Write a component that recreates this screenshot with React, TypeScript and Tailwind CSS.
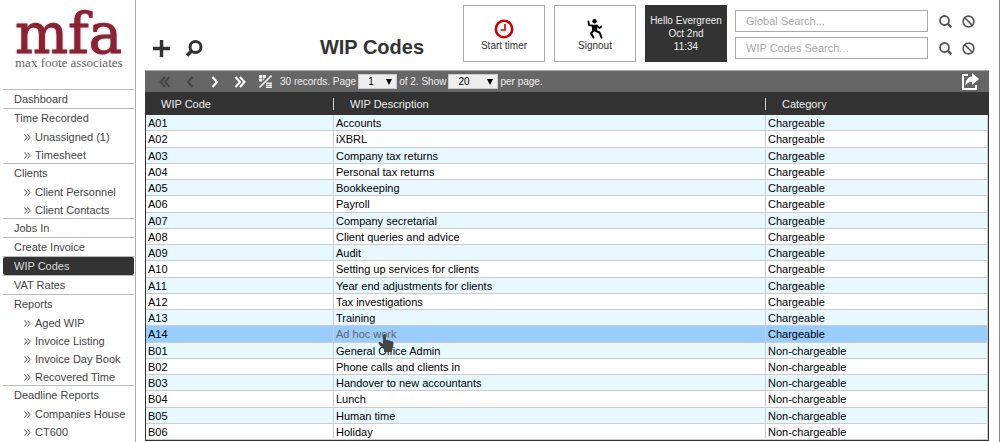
import React from "react";

const menu = [
  { label: "Dashboard", children: [] },
  { label: "Time Recorded", children: ["Unassigned (1)", "Timesheet"] },
  { label: "Clients", children: ["Client Personnel", "Client Contacts"] },
  { label: "Jobs In", children: [] },
  { label: "Create Invoice", children: [] },
  { label: "WIP Codes", children: [], active: true },
  { label: "VAT Rates", children: [] },
  { label: "Reports", children: ["Aged WIP", "Invoice Listing", "Invoice Day Book", "Recovered Time"] },
  { label: "Deadline Reports", children: ["Companies House", "CT600"] },
];

const codes = [
  ["A01", "Accounts", "Chargeable"],
  ["A02", "iXBRL", "Chargeable"],
  ["A03", "Company tax returns", "Chargeable"],
  ["A04", "Personal tax returns", "Chargeable"],
  ["A05", "Bookkeeping", "Chargeable"],
  ["A06", "Payroll", "Chargeable"],
  ["A07", "Company secretarial", "Chargeable"],
  ["A08", "Client queries and advice", "Chargeable"],
  ["A09", "Audit", "Chargeable"],
  ["A10", "Setting up services for clients", "Chargeable"],
  ["A11", "Year end adjustments for clients", "Chargeable"],
  ["A12", "Tax investigations", "Chargeable"],
  ["A13", "Training", "Chargeable"],
  ["A14", "Ad hoc work", "Chargeable"],
  ["B01", "General Office Admin", "Non-chargeable"],
  ["B02", "Phone calls and clients in", "Non-chargeable"],
  ["B03", "Handover to new accountants", "Non-chargeable"],
  ["B04", "Lunch", "Non-chargeable"],
  ["B05", "Human time", "Non-chargeable"],
  ["B06", "Holiday", "Non-chargeable"],
];

const hovered = "A14";

const rowColor = (code: string, index: number) => {
  if (code === hovered) return "bg-[#99ccff]";
  return index % 2 === 0 ? "bg-[#e8f8ff]" : "bg-white";
};

interface ChevronProps {
  double?: boolean;
  left?: boolean;
  className?: string;
}

const Chevron = ({ double, left, className }: ChevronProps) => (
  <svg
    viewBox="0 0 12 12"
    className={`h-3 w-3 ${left ? "-scale-x-100" : ""} ${className ?? ""}`}
    fill="none"
    stroke="currentColor"
    strokeWidth="2"
  >
    {double ? <path d="M1.5 1l4.5 5-4.5 5M6 1l4.500 5L6 11" /> : <path d="M3.500 1l4.500 5-4.500 5" />}
  </svg>
);

const SearchIcon = () => (
  <svg viewBox="0 0 13 13" className="h-[13px] w-[13px]" fill="none" stroke="#555" strokeWidth="1.800">
    <circle cx="5.500" cy="5.500" r="4.500" />
    <path d="M8.700 8.700l3.500 3.500" strokeWidth="2.400" />
  </svg>
);

const BanIcon = () => (
  <svg viewBox="0 0 13 13" className="h-[13px] w-[13px]" fill="none" stroke="#555" strokeWidth="1.600">
    <circle cx="6.500" cy="6.500" r="5.400" />
    <path d="M2.700 2.700l7.600 7.600" />
  </svg>
);

const Pointer = () => (
  <svg viewBox="0 0 16 18" className="absolute top-2 left-[44px] z-10 h-[18px] w-4" fill="#444">
    <path d="M5 1.500a1.500 1.500 0 0 1 3 0V6c.8-.6 2-.4 2.400.5.9-.4 2-.1 2.300.8 1.200-.4 2.800.2 2.800 1.700 0 3-.7 4.500-1.500 6.500V18H6v-2.500C4 13.500 2 11.500.700 10.300c-.9-1.200.8-2.800 2.100-2L5 9.700z" />
  </svg>
);

const SearchRow = ({ label }: { label: string }) => (
  <div className="flex items-center">
    <input
      type="search"
      aria-label={label}
      placeholder={`${label}...`}
      className="h-[22px] w-[193px] border border-[#aaa] bg-white px-[10px] text-[11px] outline-none placeholder:text-[#aaa]"
    />
    <button aria-label={`Run ${label}`} className="ml-[11px]">
      <SearchIcon />
    </button>
    <button aria-label={`Clear ${label}`} className="ml-[10px]">
      <BanIcon />
    </button>
  </div>
);

interface PickerProps {
  label: string;
  options: string[];
  className: string;
}

const Picker = ({ label, options, className }: PickerProps) => (
  <span className="grid items-center">
    <select
      aria-label={label}
      defaultValue={options[0]}
      className={`col-start-1 row-start-1 h-[15px] appearance-none border border-[#ccc] bg-[#eee] pl-[9px] text-[10px] leading-3 text-black ${className}`}
    >
      {options.map((option) => (
        <option key={option}>{option}</option>
      ))}
    </select>
    <svg viewBox="0 0 6 6" className="pointer-events-none col-start-1 row-start-1 mr-[5px] h-[6px] w-[6px] justify-self-end">
      <path d="M0 0h6L3 6z" />
    </svg>
  </span>
);

const Sidebar = () => (
  <aside className="w-[136px] flex-shrink-0 border-r border-[#aaa] pr-px pl-[3px] text-[#444]">
    <div className="flex h-[89px] flex-col pt-2 pl-3">
      <span className="h-12 font-['DejaVu_Serif',serif] text-[56px] leading-[52px] text-[#8a2236] [-webkit-text-stroke:1px_#8a2236] [text-shadow:0_0_3px_#999]">
        mfa
      </span>
      <span className="font-['Liberation_Serif',serif] text-[13px] leading-[14px] whitespace-nowrap text-[#666]">max foote associates</span>
    </div>
    <ul>
      {menu.map((item) => (
        <li key={item.label} className="border-t border-[#bbb]">
          <a
            href="#"
            className={`block h-[18px] pl-[11px] leading-[19px] ${item.active ? "rounded-xs bg-[#333] text-[#ddd]" : ""}`}
          >
            {item.label}
          </a>
          {item.children.map((child) => (
            <a key={child} href="#" className="flex h-[18px] items-center gap-1 pt-0.5 pl-[21px] leading-4">
              <svg viewBox="0 0 7 7" className="h-[7px] w-[7px]" fill="none" stroke="currentColor">
                <path d="M.5.5l2.500 3-2.500 3M3.500.5l2.500 3-2.500 3" />
              </svg>
              {child}
            </a>
          ))}
        </li>
      ))}
    </ul>
  </aside>
);

const Header = () => (
  <header className="flex h-[70px] items-start pt-[5px]">
    <button aria-label="Add WIP code" className="mt-[35px] ml-2">
      <svg viewBox="0 0 17 17" className="h-[17px] w-[17px]" stroke="#333" strokeWidth="3.500">
        <path d="M8.500 0v17M0 8.500h17" />
      </svg>
    </button>
    <button aria-label="Find WIP code" className="mt-[35px] ml-4">
      <svg viewBox="0 0 17 17" className="h-[17px] w-[17px]" fill="none" stroke="#333" strokeWidth="3">
        <circle cx="9.500" cy="7" r="5.500" />
        <path d="M5.500 11l-4.500 4.500" strokeWidth="3.500" />
      </svg>
    </button>
    <h1 className="mt-[30px] mr-[39px] flex-1 text-right text-[20px] leading-6 font-bold whitespace-nowrap">WIP Codes</h1>
    <div className="flex gap-[9px] text-[10px] leading-[13px]">
      <button className="flex h-[57px] w-[82px] flex-col items-center border border-[#aaa] pt-[13px]">
        <svg viewBox="0 0 20 20" className="h-5 w-5" fill="none" stroke="#c00">
          <circle cx="10" cy="10" r="8.200" strokeWidth="2.600" />
          <path d="M11 5v6H6.500" strokeWidth="1.600" />
        </svg>
        <span>Start timer</span>
      </button>
      <button className="flex h-[57px] w-[82px] flex-col items-center border border-[#aaa] pt-[13px]">
        <svg viewBox="0 0 16 20" className="h-5 w-4" fill="none" stroke="#000" strokeLinecap="round" strokeLinejoin="round">
          <circle cx="7.500" cy="2.200" r="2.200" fill="#000" stroke="none" />
          <path d="M1.500 2.500l.5 3.700 4.500.6M10 6.500l2.300 2.500 2.200-1.500" strokeWidth="1.800" />
          <path d="M5.800 6.800h4L9 11.500H6.200z" strokeWidth="2" fill="#000" />
          <path d="M6.200 12l-2.200 2.200 2.500 4.300M9 12l3.500 1.500 2 5" strokeWidth="2" />
        </svg>
        <span>Signout</span>
      </button>
      <div className="flex h-[57px] w-[82px] flex-col items-center justify-center bg-[#333] whitespace-nowrap text-[#eee]">
        <span>Hello Evergreen</span>
        <span>Oct 2nd</span>
        <span>11:34</span>
      </div>
    </div>
    <div className="mt-[5px] mr-[14px] ml-2 flex flex-col gap-[5px]">
      <SearchRow label="Global Search" />
      <SearchRow label="WIP Codes Search" />
    </div>
  </header>
);

const Toolbar = () => (
  <div className="flex h-[22px] items-center border-t border-[#aaa] bg-[#666] pr-2 pl-[14px] text-[10px] text-[#eee]">
    <div className="flex w-[87px] justify-between">
      <button aria-label="First page" disabled>
        <Chevron double left className="text-[#444]" />
      </button>
      <button aria-label="Previous page" disabled>
        <Chevron left className="text-[#444]" />
      </button>
      <button aria-label="Next page">
        <Chevron className="text-white" />
      </button>
      <button aria-label="Last page">
        <Chevron double className="text-white" />
      </button>
    </div>
    <button aria-label="Toggle columns" className="mr-2 ml-[13px]">
      <svg viewBox="0 0 13 13" className="h-[13px] w-[13px]" fill="#eee">
        <path d="M0 0h3.200v3H0zM3.800 0H7v3H3.800zM0 3.600h3.200v3H0zM3.800 3.600H6L3.800 6zM7 7.500h6v1.500H7zM7 9.500h6V11H7zM7 11.500h6V13H7z" />
        <path d="M12.500.5L.5 12.500" stroke="#eee" strokeWidth="1.600" />
      </svg>
    </button>
    <div className="flex flex-1 items-center gap-[2px] whitespace-nowrap">
      <span>30 records. Page</span>
      <Picker label="Page" options={["1", "2"]} className="w-[39px]" />
      <span>of 2. Show</span>
      <Picker label="Records per page" options={["20", "50", "100"]} className="w-[50px]" />
      <span>per page.</span>
    </div>
    <button aria-label="Export" className="mr-0.5">
      <svg viewBox="0 0 18 17" className="h-[17px] w-[18px]" fill="none" stroke="#fff" strokeWidth="2">
        <path d="M7 2H2v14h13v-4" />
        <path d="M11 0l7 6-7 6V9C8 9 6.500 9.500 4.500 12.500 4.500 7 7 4 11 3.500z" fill="#fff" stroke="none" />
      </svg>
    </button>
  </div>
);

const CodesTable = () => (
  <div className="border-x border-b border-[#333]">
    <table className="h-[348px] w-full table-fixed border-separate border-spacing-0">
      <colgroup>
        <col className="w-[188px]" />
        <col />
        <col className="w-[222px]" />
      </colgroup>
      <thead>
        <tr className="h-[23px] bg-[#333] text-left text-[#eee]">
          {["WIP Code", "WIP Description", "Category"].map((title) => (
            <th key={title} className="group p-0 font-normal">
              <span className="block border-r border-[#ccc] pl-4 leading-3 group-first:pl-[15px] group-last:border-r-0">{title}</span>
            </th>
          ))}
        </tr>
      </thead>
      <tbody className="text-black">
        {codes.map(([code, description, category], index) => (
          <tr key={code} className={rowColor(code, index)}>
            <td className="border-r border-b border-[#ccc] p-0 pt-0.5 pl-0.5 leading-[13px]">{code}</td>
            <td className="relative border-r border-b border-[#ccc] p-0 pt-0.5 pl-0.5 leading-[13px]">
              {code === hovered ? <span className="text-[#666]">{description}</span> : description}
              {code === hovered && <Pointer />}
            </td>
            <td className="border-r border-b border-[#ccc] p-0 pt-0.5 pl-0.5 leading-[13px]">{category}</td>
          </tr>
        ))}
      </tbody>
    </table>
  </div>
);

export default function App() {
  return (
    <div className="flex min-h-screen border-r border-[#889] bg-white font-['Liberation_Sans',Arial,sans-serif] text-[11px] text-[#333]">
      <Sidebar />
      <main className="min-w-0 flex-1 pr-[10px] pl-[9px]">
        <Header />
        <Toolbar />
        <CodesTable />
      </main>
    </div>
  );
}
